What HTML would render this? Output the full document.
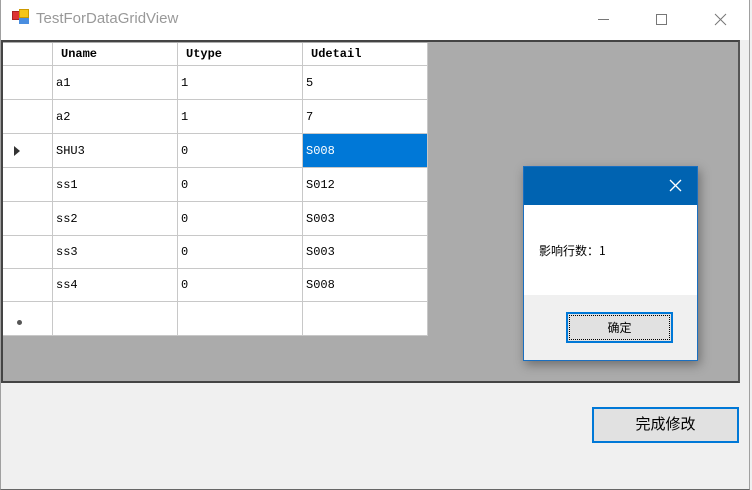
<!DOCTYPE html>
<html><head><meta charset="utf-8"><style>
*{margin:0;padding:0;box-sizing:border-box}
body{width:752px;height:490px;overflow:hidden;background:#f0f0f0;position:relative;font-family:"Liberation Sans","Noto Sans CJK SC",sans-serif}
.a{position:absolute}
.c{position:absolute;background:#fff;border-right:1px solid #c8c8c8;border-bottom:1px solid #c8c8c8;font-family:"Liberation Mono","Noto Sans CJK SC",monospace;font-size:12px;color:#000;padding-left:3px;display:flex;align-items:center}
.h{font-family:"Liberation Mono",monospace;font-weight:bold;font-size:12px}
</style></head><body>
<div class="a" style="left:0;top:0;width:750px;height:490px;border:1px solid #a0a0a0;border-top:none;border-bottom:1px solid #666"></div>
<div class="a" style="left:1px;top:0;width:748px;height:40px;background:#fff"></div>
<div class="a" style="left:12px;top:11px;width:8px;height:9px;background:#d33;border:1px solid #a22"></div>
<div class="a" style="left:19px;top:9px;width:10px;height:9px;background:#f5c518;border:1px solid #c90"></div>
<div class="a" style="left:19px;top:18px;width:10px;height:6px;background:#4a8ee0"></div>
<div class="a" style="left:36px;top:10px;font-size:15px;color:#999">TestForDataGridView</div>
<div class="a" style="left:598px;top:19px;width:11px;height:1px;background:#777"></div>
<div class="a" style="left:656px;top:14px;width:11px;height:11px;border:1px solid #777"></div>
<svg class="a" style="left:714px;top:13px" width="13" height="13"><path d="M1 1L12 12M12 1L1 12" stroke="#777" stroke-width="1"/></svg>
<div class="a" style="left:1px;top:40px;width:739px;height:343px;background:#ababab;border:2px solid #444;border-right-color:#555"></div>

<div class="c" style="left:3px;top:43px;width:50px;height:23px"></div>
<div class="c h" style="left:53px;top:43px;width:125px;height:23px;padding-left:8px">Uname</div>
<div class="c h" style="left:178px;top:43px;width:125px;height:23px;padding-left:8px">Utype</div>
<div class="c h" style="left:303px;top:43px;width:125px;height:23px;padding-left:8px">Udetail</div>

<div class="c" style="left:3px;top:66px;width:50px;height:34px"></div><div class="c" style="left:53px;top:66px;width:125px;height:34px">a1</div><div class="c" style="left:178px;top:66px;width:125px;height:34px">1</div><div class="c" style="left:303px;top:66px;width:125px;height:34px">5</div>
<div class="c" style="left:3px;top:100px;width:50px;height:34px"></div><div class="c" style="left:53px;top:100px;width:125px;height:34px">a2</div><div class="c" style="left:178px;top:100px;width:125px;height:34px">1</div><div class="c" style="left:303px;top:100px;width:125px;height:34px">7</div>
<div class="c" style="left:3px;top:134px;width:50px;height:34px"><svg width="20" height="12"><path d="M8 1L14 6L8 11Z" fill="#333"/></svg></div><div class="c" style="left:53px;top:134px;width:125px;height:34px">SHU3</div><div class="c" style="left:178px;top:134px;width:125px;height:34px">0</div><div class="c" style="left:303px;top:134px;width:125px;height:34px;background:#0078d7;color:#fff">S008</div>
<div class="c" style="left:3px;top:168px;width:50px;height:34px"></div><div class="c" style="left:53px;top:168px;width:125px;height:34px">ss1</div><div class="c" style="left:178px;top:168px;width:125px;height:34px">0</div><div class="c" style="left:303px;top:168px;width:125px;height:34px">S012</div>
<div class="c" style="left:3px;top:202px;width:50px;height:34px"></div><div class="c" style="left:53px;top:202px;width:125px;height:34px">ss2</div><div class="c" style="left:178px;top:202px;width:125px;height:34px">0</div><div class="c" style="left:303px;top:202px;width:125px;height:34px">S003</div>
<div class="c" style="left:3px;top:236px;width:50px;height:33px"></div><div class="c" style="left:53px;top:236px;width:125px;height:33px">ss3</div><div class="c" style="left:178px;top:236px;width:125px;height:33px">0</div><div class="c" style="left:303px;top:236px;width:125px;height:33px">S003</div>
<div class="c" style="left:3px;top:269px;width:50px;height:33px"></div><div class="c" style="left:53px;top:269px;width:125px;height:33px">ss4</div><div class="c" style="left:178px;top:269px;width:125px;height:33px">0</div><div class="c" style="left:303px;top:269px;width:125px;height:33px">S008</div>
<div class="c" style="left:3px;top:302px;width:50px;height:34px"><div style="width:5px;height:5px;border-radius:50%;background:#555;margin:8px 0 0 11px"></div></div><div class="c" style="left:53px;top:302px;width:125px;height:34px"></div><div class="c" style="left:178px;top:302px;width:125px;height:34px"></div><div class="c" style="left:303px;top:302px;width:125px;height:34px"></div>

<div class="a" style="left:523px;top:166px;width:175px;height:195px;background:#f0f0f0;border:1px solid #1a6fc0;box-shadow:2px 4px 10px rgba(0,0,0,.35)"></div>
<div class="a" style="left:524px;top:167px;width:173px;height:38px;background:#0063b1"></div>
<svg class="a" style="left:669px;top:179px" width="13" height="13"><path d="M1 1L12 12M12 1L1 12" stroke="#fff" stroke-width="1.3"/></svg>
<div class="a" style="left:524px;top:205px;width:173px;height:90px;background:#fff"></div>
<div class="a" style="left:539px;top:242px;font-size:12px;color:#000;font-family:'Noto Sans CJK SC',sans-serif">影响行数：1</div>
<div class="a" style="left:566px;top:312px;width:107px;height:31px;border:2px solid #0078d7;background:#e1e1e1"><div style="position:absolute;inset:1px;border:1px dotted #000;text-align:center;line-height:25px;font-size:12px">确定</div></div>

<div class="a" style="left:592px;top:407px;width:147px;height:36px;border:2px solid #0078d7;background:#e1e1e1;text-align:center;line-height:31px;font-size:15px">完成修改</div>
</body></html>
